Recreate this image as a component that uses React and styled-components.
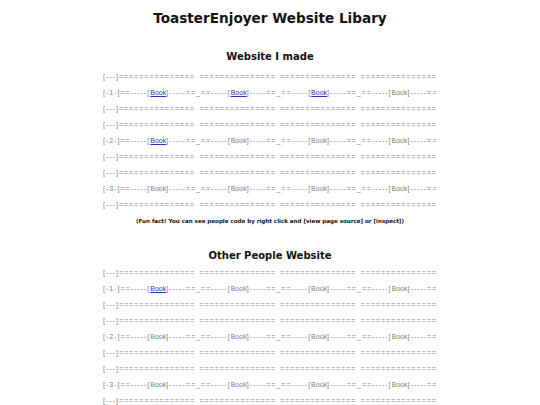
import React from "react";
import styled, { createGlobalStyle } from "styled-components";

const GlobalStyle = createGlobalStyle`
  * { margin: 0; padding: 0; box-sizing: border-box; }
  body {
    background: #ffffff;
    font-family: "DejaVu Sans", Verdana, sans-serif;
    -webkit-font-smoothing: antialiased;
  }
`;

const Page = styled.main`
  display: flex;
  flex-direction: column;
  align-items: center;
  padding-top: 9px;
`;

const Title = styled.h1`
  font-size: 13.6px;
  font-weight: bold;
  color: #111;
  line-height: 18px;
`;

const SectionTitle = styled.h2`
  font-size: 10px;
  font-weight: bold;
  color: #111;
  line-height: 14px;
  margin-top: ${(p) => p.$top}px;
  margin-bottom: ${(p) => p.$bottom}px;
`;

const Shelf = styled.div`
  display: flex;
  flex-direction: column;
`;

const Row = styled.div`
  font-family: "Liberation Sans", Arial, sans-serif;
  font-size: 7px;
  letter-spacing: 1px;
  word-spacing: 1.3px;
  line-height: 16px;
  color: #808080;
  white-space: pre;
  width: 334px;
  overflow: hidden;
`;

const Book = styled.a`
  letter-spacing: 0;
  color: ${(p) => (p.$link ? "#3030c0" : "#808080")};
  text-decoration: ${(p) => (p.$link ? "underline" : "none")};
`;

const Note = styled.p`
  font-size: 5.55px;
  font-weight: bold;
  color: #111;
  margin-top: 5px;
`;

const EQ = "===============";
const Empty = () => <Row>{`[---]${EQ} ${EQ} ${EQ} ${EQ}`}</Row>;

const BookRow = ({ n, links }) => (
  <Row>
    {`[-${n}-]==-----`}
    {links.map((l, i) => (
      <React.Fragment key={i}>
        {i > 0 && "-----==_==-----"}
        [<Book $link={l} href={l ? "#" : undefined}>Book</Book>]
      </React.Fragment>
    ))}
    {"-----=="}
  </Row>
);

const Section = ({ title, top, bottom, rows }) => (
  <>
    <SectionTitle $top={top} $bottom={bottom}>
      {title}
    </SectionTitle>
    <Shelf>
      <Empty />
      <BookRow n={1} links={rows[0]} />
      <Empty />
      <Empty />
      <BookRow n={2} links={rows[1]} />
      <Empty />
      <Empty />
      <BookRow n={3} links={rows[2]} />
      <Empty />
    </Shelf>
  </>
);

export default function App() {
  return (
    <>
      <GlobalStyle />
      <Page>
        <Title>ToasterEnjoyer Website Libary</Title>
        <Section
          title="Website I made"
          top={23}
          bottom={5}
          rows={[
            [true, true, true, false],
            [true, false, false, false],
            [false, false, false, false],
          ]}
        />
        <Note>(Fun fact! You can see people code by right click and [view page source] or [inspect])</Note>
        <Section
          title="Other People Website"
          top={25}
          bottom={2}
          rows={[
            [true, false, false, false],
            [false, false, false, false],
            [false, false, false, false],
          ]}
        />
      </Page>
    </>
  );
}
